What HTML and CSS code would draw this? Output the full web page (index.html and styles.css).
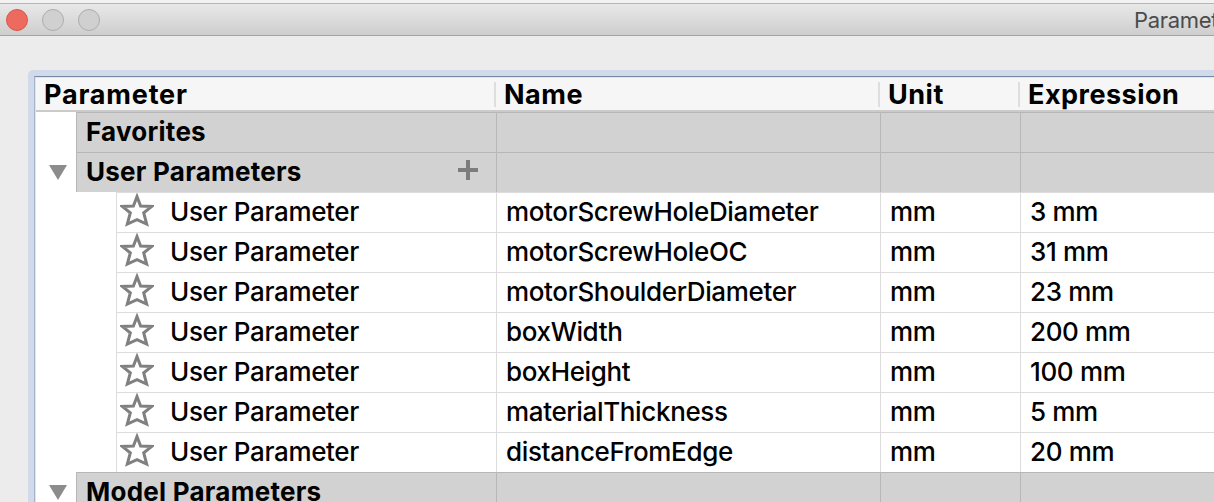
FILE: index.html
```html
<!DOCTYPE html>
<html lang="en">
<head>
<meta charset="utf-8">
<title>Parameters</title>
<link rel="stylesheet" href="styles.css">
</head>
<body>
<svg class="defs" width="0" height="0">
  <symbol id="star" viewBox="0 0 34 34"><path d="M17 3.6 L20.6 13 L31.6 13.5 L23.7 19.9 L26.7 31 L17 26.6 L7.3 31 L10.3 19.9 L2.4 13.5 L13.4 13 Z" fill="none" stroke="#808080" stroke-width="3"/></symbol>
</svg>
<header class="titlebar">
  <span class="light close"></span><span class="light"></span><span class="light"></span>
  <span class="title">Parameters</span>
</header>
<main class="panel">
  <div class="table">
    <div class="row head">
      <div class="cell first">Parameter</div><div class="cell">Name</div><div class="cell">Unit</div><div class="cell last">Expression</div>
    </div>
    <div class="row group">
      <div class="gutter"></div><div class="cell first">Favorites</div><div class="cell"></div><div class="cell"></div><div class="cell"></div>
    </div>
    <div class="row group">
      <div class="gutter"><i class="arrow"></i></div><div class="cell first"><span>User Parameters</span><i class="plus"></i></div><div class="cell"></div><div class="cell"></div><div class="cell"></div>
    </div>
    <div class="row item"><div class="gutter"></div><div class="cell first"><svg class="star"><use href="#star"/></svg>User Parameter</div><div class="cell">motorScrewHoleDiameter</div><div class="cell">mm</div><div class="cell">3 mm</div></div>
    <div class="row item"><div class="gutter"></div><div class="cell first"><svg class="star"><use href="#star"/></svg>User Parameter</div><div class="cell">motorScrewHoleOC</div><div class="cell">mm</div><div class="cell">31 mm</div></div>
    <div class="row item"><div class="gutter"></div><div class="cell first"><svg class="star"><use href="#star"/></svg>User Parameter</div><div class="cell">motorShoulderDiameter</div><div class="cell">mm</div><div class="cell">23 mm</div></div>
    <div class="row item"><div class="gutter"></div><div class="cell first"><svg class="star"><use href="#star"/></svg>User Parameter</div><div class="cell">boxWidth</div><div class="cell">mm</div><div class="cell">200 mm</div></div>
    <div class="row item"><div class="gutter"></div><div class="cell first"><svg class="star"><use href="#star"/></svg>User Parameter</div><div class="cell">boxHeight</div><div class="cell">mm</div><div class="cell">100 mm</div></div>
    <div class="row item"><div class="gutter"></div><div class="cell first"><svg class="star"><use href="#star"/></svg>User Parameter</div><div class="cell">materialThickness</div><div class="cell">mm</div><div class="cell">5 mm</div></div>
    <div class="row item"><div class="gutter"></div><div class="cell first"><svg class="star"><use href="#star"/></svg>User Parameter</div><div class="cell">distanceFromEdge</div><div class="cell">mm</div><div class="cell">20 mm</div></div>
    <div class="row group">
      <div class="gutter"><i class="arrow"></i></div><div class="cell first">Model Parameters</div><div class="cell"></div><div class="cell"></div><div class="cell"></div>
    </div>
  </div>
</main>
</body>
</html>
```
FILE: styles.css
```css
* { box-sizing: border-box; }
body {
  margin: 0;
  width: 1214px;
  height: 502px;
  overflow: hidden;
  background: #ececec;
  font-family: Inter, "Liberation Sans", sans-serif;
  font-size: 26px;
  color: #000;
}
.defs { display: block; }
.titlebar {
  display: flex;
  align-items: center;
  gap: 14px;
  height: 36px;
  padding: 4px 0 0 6px;
  border-bottom: 1px solid #a3a3a3;
  background: linear-gradient(#f2f2f2 0 3px, #b5b5b5 3px 4px, #e8e8e8 4px, #cecece 35px);
}
.light {
  flex: none;
  width: 22px;
  height: 22px;
  border: 1px solid #adadad;
  border-radius: 50%;
  background: #d0d0d0;
}
.close { background: #ed6a5f; border-color: #d9564c; }
.title {
  margin-left: 1020px;
  font-size: 22px;
  line-height: 30px;
  letter-spacing: -0.3px;
  color: #4b4b4b;
  white-space: nowrap;
}
.panel {
  margin: 34px 0 0 28px;
  height: 440px;
  padding: 6px 0 0 6px;
  border-top-left-radius: 5px;
  background: #d0daea;
}
.table {
  height: 440px;
  border-top: 1px solid #7889a3;
  border-left: 1px solid #a5b3ca;
  background: #fff;
  box-shadow: inset 1px 1px 0 #dce5f2;
  padding: 1px 0 0 1px;
}
.row {
  display: grid;
  grid-template-columns: 40px 420px 384px 140px 1fr;
  height: 40px;
}
.cell {
  display: flex;
  align-items: center;
  padding: 0 0 2px 9px;
  border-left: 1px solid #dcdcdc;
  border-top: 1px solid #dcdcdc;
  white-space: nowrap;
}
.gutter { padding: 13px 0 0 13px; }
.head {
  grid-template-columns: 460px 384px 140px 1fr;
  height: 34px;
  padding-top: 4px;
  background: #f6f6f6;
  border-bottom: 2px solid #cacaca;
  font-weight: 750;
  font-size: 27px;
  letter-spacing: 0.5px;
}
.head .cell {
  height: 25px;
  margin-left: -2px;
  padding: 0 0 0 8px;
  border-top: 0;
  border-left: 2px solid #dedede;
}
.head .first { border-left: 0; padding-left: 10px; letter-spacing: 0.8px; }
.group { font-weight: 750; letter-spacing: 0.25px; }
.group .cell { background: #d2d2d2; border-color: #b7b7b7; }
.group .first { justify-content: space-between; padding-right: 18px; }
.item {
  grid-template-columns: 80px 380px 384px 140px 1fr;
  font-weight: 450;
  letter-spacing: -0.35px;
}
.item .first { padding-left: 3px; }
.star { flex: none; width: 34px; height: 34px; margin: -4px 16px 0 0; }
.arrow {
  display: block;
  width: 18px;
  height: 15px;
  background: #8c8c8c;
  clip-path: polygon(0 0, 100% 0, 50% 100%);
}
.plus {
  width: 20px;
  height: 20px;
  margin-top: -4px;
  background: linear-gradient(#7c7c7c, #7c7c7c) center / 20px 4px no-repeat,
              linear-gradient(#7c7c7c, #7c7c7c) center / 4px 20px no-repeat;
}
```
